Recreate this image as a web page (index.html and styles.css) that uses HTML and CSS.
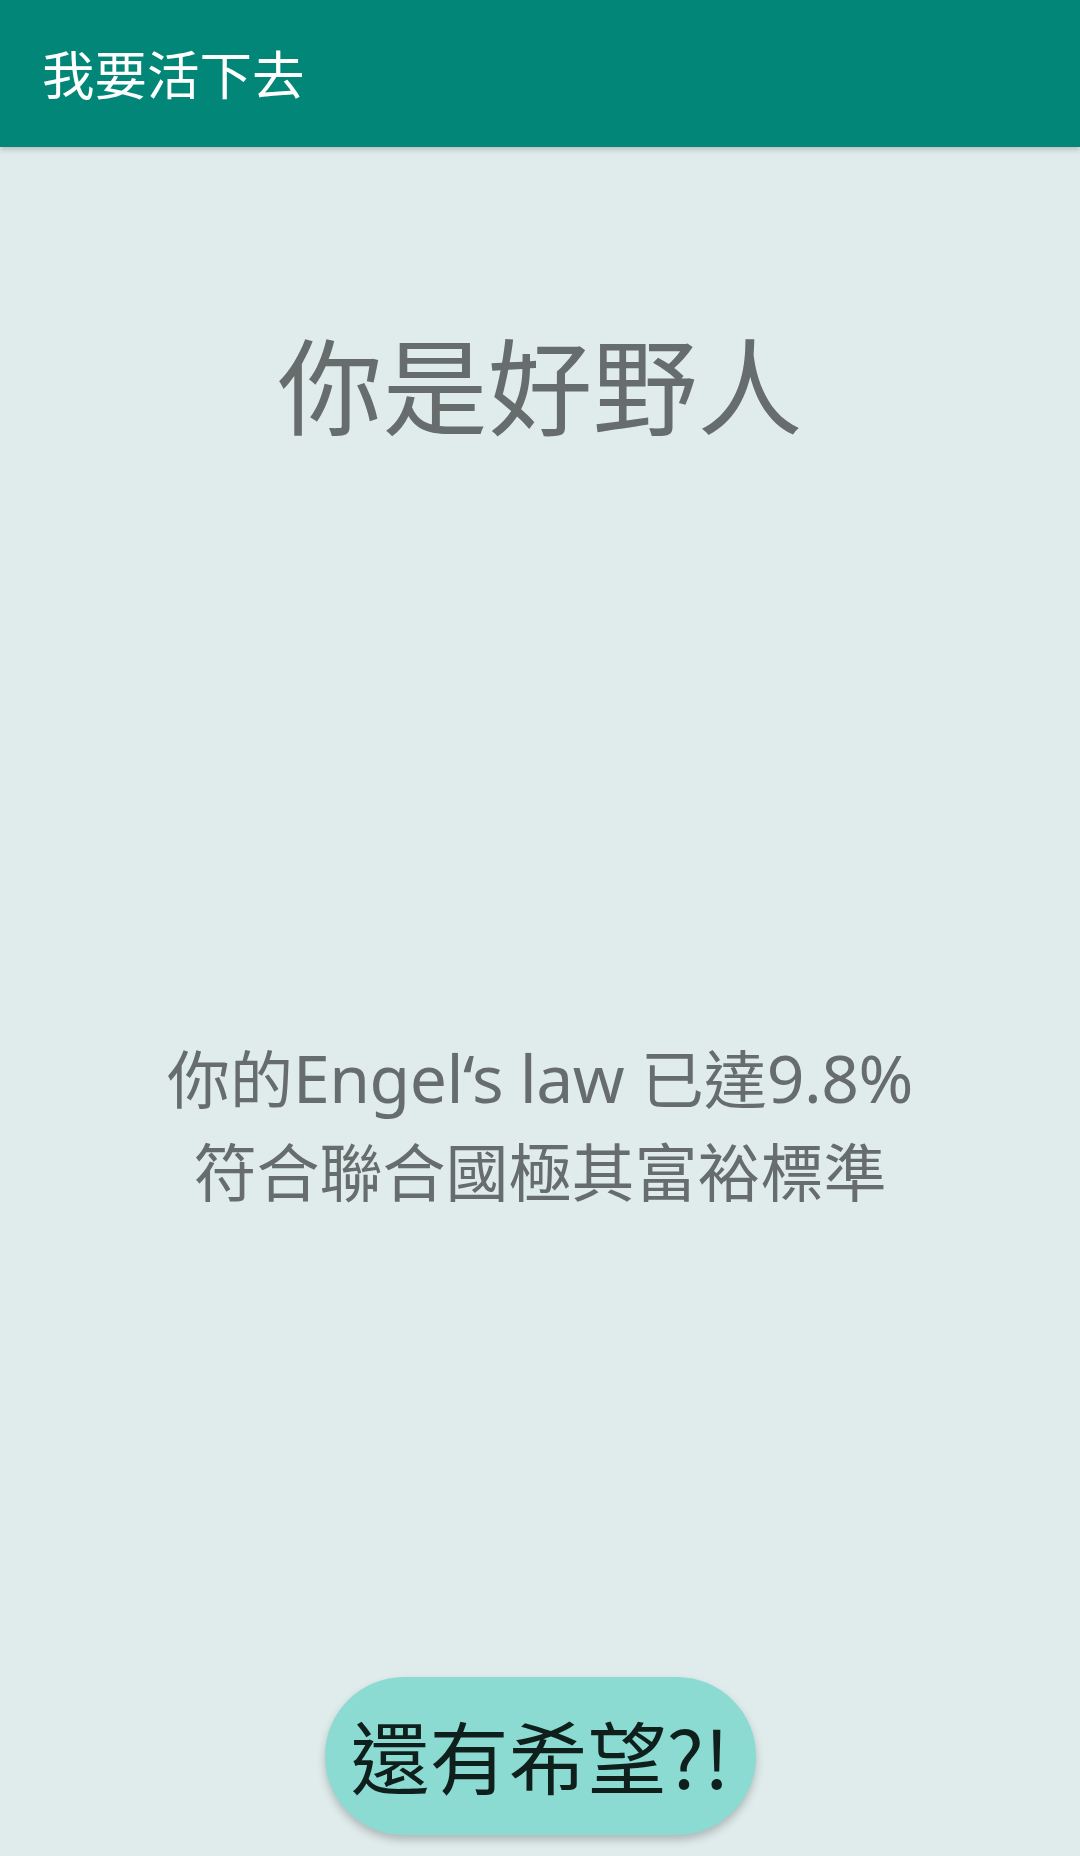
FILE: index.html
```html
<!DOCTYPE html>
<html lang="zh-Hant">
<head>
<meta charset="utf-8">
<title>我要活下去</title>
<link rel="stylesheet" href="styles.css">
</head>
<body>
<div class="screen">
  <header class="appbar">
    <h1 class="appbar-title">我要活下去</h1>
  </header>
  <main class="content">
    <h2 class="verdict">你是好野人</h2>
    <p class="detail">你的<span class="latin">Engel‘s law </span>已達<span class="latin">9.8%</span><br>符合聯合國極其富裕標準</p>
    <div class="spacer"></div>
    <button class="hope-btn">還有希望?!</button>
  </main>
</div>
</body>
</html>
```

FILE: styles.css
```css
html, body {
  margin: 0;
  padding: 0;
}

body {
  background: #e0ecec;
  font-family: "Noto Sans CJK TC", "Noto Sans", sans-serif;
}

.screen {
  width: 1080px;
  height: 1856px;
  display: flex;
  flex-direction: column;
  overflow: hidden;
}

.appbar {
  height: 147px;
  flex: none;
  background: #018677;
  display: flex;
  align-items: center;
  padding-left: 42px;
  box-shadow: 0 3px 5px rgba(0, 0, 0, 0.18);
  position: relative;
  z-index: 1;
}

.appbar-title {
  margin: 0;
  font-size: 52.5px;
  font-weight: 400;
  color: #ffffff;
  line-height: 1;
  margin-top: -2px;
}

.content {
  flex: 1;
  display: flex;
  flex-direction: column;
  align-items: center;
  padding-top: 171px;
}

.verdict {
  margin: 0;
  font-size: 105px;
  font-weight: 400;
  line-height: 126px;
  color: #676d6c;
  text-align: center;
}

.detail {
  margin: 586px 0 0;
  font-size: 63px;
  line-height: 91px;
  color: #676d6c;
  text-align: center;
  font-weight: 400;
}

.latin {
  font-family: "Noto Sans", sans-serif;
  font-size: 66px;
  letter-spacing: -0.5px;
}

.spacer {
  flex: 1;
}

.hope-btn {
  flex: none;
  width: 431px;
  height: 158px;
  margin-bottom: 21px;
  border: none;
  border-radius: 79px;
  background: #8bdbd2;
  color: #0f1f1c;
  font-family: "Noto Sans CJK TC", "Noto Sans", sans-serif;
  font-size: 79px;
  line-height: 1;
  padding: 0 0 4px;
  box-shadow: 0 5px 9px rgba(0, 0, 0, 0.22);
}
```
